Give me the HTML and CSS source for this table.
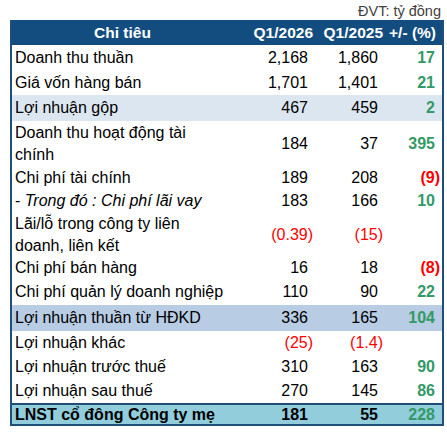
FILE: index.html
```html
<!DOCTYPE html>
<html>
<head>
  <title>Kết quả kinh doanh Q1/2026</title>
  <link rel="stylesheet" href="styles.css">
</head>
<body>
  <div class="report">
    <div class="unit">ĐVT: tỷ đồng</div>

    <table class="fin-table">
      <colgroup>
        <col class="col-name">
        <col class="col-q1">
        <col class="col-q2">
        <col class="col-pct">
      </colgroup>
      <thead>
        <tr>
          <th class="name">Chỉ tiêu</th>
          <th>Q1/2026</th>
          <th>Q1/2025</th>
          <th class="pct">+/- (%)</th>
        </tr>
      </thead>
      <tbody>
        <tr class="h25">
          <td class="name">Doanh thu thuần</td>
          <td>2,168</td>
          <td>1,860</td>
          <td class="pct up">17</td>
        </tr>
        <tr class="h25">
          <td class="name">Giá vốn hàng bán</td>
          <td>1,701</td>
          <td>1,401</td>
          <td class="pct up">21</td>
        </tr>
        <tr class="h26 band-light">
          <td class="name">Lợi nhuận gộp</td>
          <td>467</td>
          <td>459</td>
          <td class="pct up">2</td>
        </tr>
        <tr class="double">
          <td class="name">Doanh thu hoạt động tài<br>chính</td>
          <td>184</td>
          <td>37</td>
          <td class="pct up">395</td>
        </tr>
        <tr class="h23">
          <td class="name">Chi phí tài chính</td>
          <td>189</td>
          <td>208</td>
          <td class="pct"><span class="neg">(9)</span></td>
        </tr>
        <tr class="h23">
          <td class="name">- <em>Trong đó : Chi phí lãi vay</em></td>
          <td>183</td>
          <td>166</td>
          <td class="pct up">10</td>
        </tr>
        <tr class="double">
          <td class="name">Lãi/lỗ trong công ty liên<br>doanh, liên kết</td>
          <td><span class="neg">(0.39)</span></td>
          <td><span class="neg">(15)</span></td>
          <td class="pct"></td>
        </tr>
        <tr class="h22">
          <td class="name">Chi phí bán hàng</td>
          <td>16</td>
          <td>18</td>
          <td class="pct"><span class="neg">(8)</span></td>
        </tr>
        <tr class="h26">
          <td class="name">Chi phí quản lý doanh nghiệp</td>
          <td>110</td>
          <td>90</td>
          <td class="pct up">22</td>
        </tr>
        <tr class="h26 band-mid">
          <td class="name">Lợi nhuận thuần từ HĐKD</td>
          <td>336</td>
          <td>165</td>
          <td class="pct up">104</td>
        </tr>
        <tr>
          <td class="name">Lợi nhuận khác</td>
          <td><span class="neg">(25)</span></td>
          <td><span class="neg">(1.4)</span></td>
          <td class="pct"></td>
        </tr>
        <tr>
          <td class="name">Lợi nhuận trước thuế</td>
          <td>310</td>
          <td>163</td>
          <td class="pct up">90</td>
        </tr>
        <tr>
          <td class="name">Lợi nhuận sau thuế</td>
          <td>270</td>
          <td>145</td>
          <td class="pct up">86</td>
        </tr>
        <tr class="total">
          <td class="name">LNST cổ đông Công ty mẹ</td>
          <td>181</td>
          <td>55</td>
          <td class="pct up">228</td>
        </tr>
      </tbody>
    </table>
  </div>
</body>
</html>
```

FILE: styles.css
```css
body {
  margin: 0;
  background-color: #fff;
  font-family: "Liberation Sans", Arial, sans-serif;
  color: #000;
}
.report {
  width: 434px;
  padding: 2px 3px 0 10px;
}
.unit {
  height: 18px;
  line-height: 18px;
  padding-right: 3px;
  text-align: right;
  font-size: 14.5px;
  color: #404040;
}
.fin-table {
  width: 434px;
  table-layout: fixed;
  border-collapse: separate;
  border-spacing: 0;
  border-left: 2px solid #1f4e79;
  border-right: 2px solid #1f4e79;
  border-bottom: 2px solid #1f4e79;
  font-size: 16px;
}
.col-name {
  width: 221px;
}
.col-q1 {
  width: 83px;
}
.col-q2 {
  width: 70px;
}
.col-pct {
  width: 56px;
}
.fin-table th {
  height: 25px;
  padding: 0 3px 0 0;
  background-color: #134d80;
  color: #fff;
  font-weight: bold;
  font-size: 15.5px;
  text-align: right;
  white-space: nowrap;
}
.fin-table th.name {
  text-align: center;
  padding: 0;
}
.fin-table th.pct {
  padding-right: 6px;
}
.fin-table td {
  height: 24px;
  padding: 0 8px 0 0;
  line-height: 22px;
  text-align: right;
  white-space: nowrap;
}
.fin-table td.name {
  padding: 0 2px 0 3px;
  text-align: left;
}
.fin-table td.pct {
  padding-right: 7px;
  font-weight: bold;
}
.fin-table em {
  font-style: italic;
}
.up {
  color: #339966;
}
.neg {
  display: inline-block;
  margin-right: -5px;
  color: #ff0000;
}

.h22 td {
  height: 22px;
}
.h23 td {
  height: 23px;
}
.h25 td {
  height: 25px;
}
.h26 td {
  height: 26px;
}
.double td {
  height: 45px;
}

.band-light td {
  background-color: #dce6f1;
}
.band-mid td {
  background-color: #b8cce4;
}
.fin-table .total td {
  height: 19px;
  line-height: 19px;
  background-color: #92cddc;
  border-top: 2px solid #1f4e79;
  font-weight: bold;
}
.total td.up {
  color: #339966;
}
```
